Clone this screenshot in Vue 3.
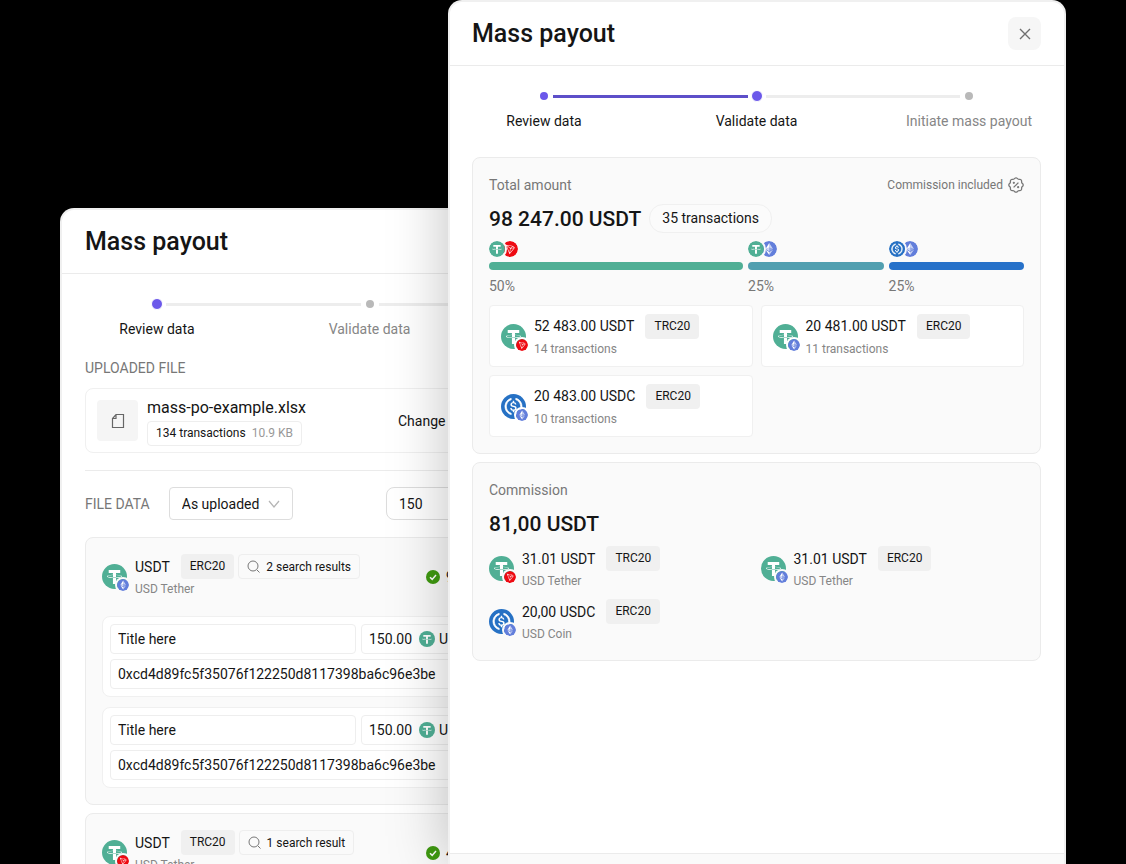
<script setup>
import { ref } from 'vue'

const steps = ['Review data', 'Validate data', 'Initiate mass payout']

const shares = [
  { coin: 'usdt', chain: 'trx', percent: 50, weight: 255, color: '#50af95' },
  { coin: 'usdt', chain: 'eth', percent: 25, weight: 136, color: '#519fb0' },
  { coin: 'usdc', chain: 'eth', percent: 25, weight: 136, color: '#2671c9' }
]
const shareColumns = shares.map((s) => `${s.weight}fr`).join(' ')

const totals = [
  { coin: 'usdt', chain: 'trx', amount: '52 483.00 USDT', network: 'TRC20', note: '14 transactions' },
  { coin: 'usdt', chain: 'eth', amount: '20 481.00 USDT', network: 'ERC20', note: '11 transactions' },
  { coin: 'usdc', chain: 'eth', amount: '20 483.00 USDC', network: 'ERC20', note: '10 transactions' }
]

const commissions = [
  { coin: 'usdt', chain: 'trx', amount: '31.01 USDT', network: 'TRC20', note: 'USD Tether' },
  { coin: 'usdt', chain: 'eth', amount: '31.01 USDT', network: 'ERC20', note: 'USD Tether' },
  { coin: 'usdc', chain: 'eth', amount: '20,00 USDC', network: 'ERC20', note: 'USD Coin' }
]

const address = '0xcd4d89fc5f35076f122250d8117398ba6c96e3be'
const groups = ref([
  {
    chain: 'eth', network: 'ERC20', found: '2 search results', valid: '9',
    rows: [
      { title: 'Title here', amount: '150.00', address },
      { title: 'Title here', amount: '150.00', address }
    ]
  },
  {
    chain: 'trx', network: 'TRC20', found: '1 search result', valid: '4',
    rows: [{ title: 'Title here', amount: '150.00', address }]
  }
])
const order = ref('As uploaded')
const limit = ref('150')
</script>

<template>
  <main class="stage">
    <svg class="sprite" aria-hidden="true">
      <symbol id="usdt" viewBox="0 0 32 32">
        <circle cx="16" cy="16" r="16" fill="#50af95" />
        <path fill="#fff" d="M17.922 17.383v-.002c-.11.008-.677.042-1.942.042-1.01 0-1.721-.03-1.971-.042v.003c-3.888-.171-6.79-.848-6.79-1.658 0-.809 2.902-1.486 6.79-1.66v2.644c.254.018.982.061 1.988.061 1.207 0 1.812-.05 1.925-.06v-2.643c3.88.173 6.775.85 6.775 1.658 0 .81-2.895 1.485-6.775 1.657m0-3.59v-2.366h5.414V7.819H8.595v3.608h5.414v2.365c-4.4.202-7.709 1.074-7.709 2.118 0 1.044 3.309 1.915 7.709 2.118v7.582h3.913v-7.584c4.393-.202 7.694-1.073 7.694-2.116 0-1.043-3.301-1.914-7.694-2.117" />
      </symbol>
      <symbol id="usdc" viewBox="0 0 32 32">
        <circle cx="16" cy="16" r="16" fill="#2671c4" />
        <path fill="#fff" d="M20.022 18.124c0-2.124-1.28-2.852-3.84-3.156-1.828-.243-2.193-.728-2.193-1.578 0-.85.61-1.396 1.828-1.396 1.097 0 1.707.364 2.011 1.275a.458.458 0 00.427.303h.975a.416.416 0 00.427-.425v-.06a3.04 3.04 0 00-2.743-2.489V9.142c0-.243-.183-.425-.487-.486h-.915c-.243 0-.426.182-.487.486v1.396c-1.829.242-2.986 1.456-2.986 2.974 0 2.002 1.218 2.791 3.778 3.095 1.707.303 2.255.668 2.255 1.639 0 .97-.853 1.638-2.011 1.638-1.585 0-2.133-.667-2.316-1.578-.06-.242-.244-.364-.427-.364h-1.036a.416.416 0 00-.426.425v.06c.243 1.518 1.219 2.61 3.23 2.914v1.457c0 .242.183.425.487.485h.915c.243 0 .426-.182.487-.485V21.34c1.829-.303 3.047-1.578 3.047-3.217z" />
        <path fill="#fff" stroke="#fff" stroke-width=".8" d="M12.892 24.497c-4.754-1.7-7.192-6.98-5.424-11.653.914-2.55 2.925-4.491 5.424-5.402.244-.121.365-.303.365-.607v-.85c0-.242-.121-.424-.365-.485-.061 0-.183 0-.244.06a10.895 10.895 0 00-7.13 13.717c1.096 3.4 3.717 6.01 7.13 7.102.244.121.488 0 .548-.243.061-.06.061-.122.061-.243v-.85c0-.182-.182-.424-.365-.546zm6.46-18.936c-.244-.122-.488 0-.548.242-.061.061-.061.122-.061.243v.85c0 .243.182.485.365.607 4.754 1.7 7.192 6.98 5.424 11.653-.914 2.55-2.925 4.491-5.424 5.402-.244.121-.365.303-.365.607v.85c0 .242.121.424.365.485.061 0 .183 0 .244-.06a10.895 10.895 0 007.13-13.717c-1.096-3.46-3.778-6.07-7.13-7.162z" />
      </symbol>
      <symbol id="eth" viewBox="0 0 32 32">
        <circle cx="16" cy="16" r="16" fill="#627edb" />
        <path fill="#fff" fill-opacity=".65" d="M16.5 4v8.870l7.497 3.350z" />
        <path fill="#fff" d="M16.500 4L9 16.220l7.500-3.350z" />
        <path fill="#fff" fill-opacity=".65" d="M16.500 21.968v6.027L24 17.616z" />
        <path fill="#fff" d="M16.500 27.995v-6.028L9 17.616z" />
        <path fill="#fff" fill-opacity=".3" d="M16.500 20.573l7.497-4.353-7.497-3.348z" />
        <path fill="#fff" fill-opacity=".7" d="M9 16.220l7.500 4.353v-7.701z" />
      </symbol>
      <symbol id="trx" viewBox="0 0 32 32">
        <circle cx="16" cy="16" r="16" fill="#ee0a12" />
        <path fill="#fff" d="M21.932 9.913L7.500 7.257l7.595 19.112 10.583-12.894-3.746-3.562zm-.232 1.170l2.208 2.099-6.038 1.093 3.830-3.192zm-5.142 2.973l-6.364-5.278 10.402 1.914-4.038 3.364zm-.453.934l-1.038 8.580L9.472 9.487l6.633 5.502zm.960.455l6.687-1.210-7.670 9.343.983-8.133z" />
      </symbol>
    </svg>

    <section class="panel back" aria-label="Review data">
      <header class="head"><h2>Mass payout</h2></header>
      <div class="body">
        <div class="track">
          <i class="dot now"></i><i class="line"></i><i class="dot"></i><i class="line"></i><i class="dot"></i>
        </div>
        <ol class="labels">
          <li v-for="(s, i) in steps" :key="s" :class="{ on: i < 1 }">{{ s }}</li>
        </ol>

        <h3 class="caption">UPLOADED FILE</h3>
        <div class="file">
          <span class="thumb">
            <svg width="14" height="16" viewBox="0 0 14 16" fill="none" stroke="#666" stroke-width="1.200">
              <path d="M5 1.500h7.500v13h-11V5.500zM5 1.500v4H1.500" />
            </svg>
          </span>
          <div class="fileinfo">
            <span class="filename">mass-po-example.xlsx</span>
            <span class="chip">134 transactions <span class="muted">10.9 KB</span></span>
          </div>
          <button type="button" class="change">Change file</button>
        </div>
        <hr />
        <div class="tools">
          <label for="order" class="caption">FILE DATA</label>
          <span class="picker">
            <select id="order" v-model="order"><option>As uploaded</option></select>
            <svg width="12" height="8" viewBox="0 0 12 8" fill="none" stroke="#b5b5b5" stroke-width="1.200"><path d="M1 1l5 6 5-6" /></svg>
          </span>
          <input v-model="limit" class="limit" aria-label="Row limit" />
        </div>

        <article v-for="g in groups" :key="g.network" class="card group">
          <div class="grouphead">
            <div class="asset">
              <span class="coin">
                <svg class="main"><use href="#usdt" /></svg>
                <svg class="sub"><use :href="'#' + g.chain" /></svg>
              </span>
              <div class="words">
                <div class="first">
                  <span class="name">USDT</span><span class="tag">{{ g.network }}</span>
                  <span class="chip found">
                    <svg width="13" height="13" viewBox="0 0 13 13" fill="none" stroke="#777"><circle cx="6" cy="6" r="5" /><path d="M10 10l2.500 2.500" /></svg>
                    {{ g.found }}
                  </span>
                </div>
                <span class="note">USD Tether</span>
              </div>
            </div>
            <span class="status">
              <svg width="14" height="14" viewBox="0 0 14 14"><circle cx="7" cy="7" r="7" fill="#3f9a10" /><path d="M4 7.200l2.200 2.200L10 5" fill="none" stroke="#fff" stroke-width="1.500" /></svg>
              {{ g.valid }}
            </span>
          </div>
          <div v-for="(r, i) in g.rows" :key="i" class="entry">
            <input v-model="r.title" class="field" aria-label="Title" />
            <div class="field money">
              <input v-model="r.amount" aria-label="Amount" />
              <svg width="16" height="16"><use href="#usdt" /></svg>
              <span>USDT</span>
            </div>
            <input v-model="r.address" class="field wide" aria-label="Address" />
          </div>
        </article>
      </div>
    </section>

    <section class="panel front" aria-label="Validate data">
      <header class="head">
        <h1>Mass payout</h1>
        <button type="button" class="close" aria-label="Close">
          <svg width="12" height="12" viewBox="0 0 12 12" fill="none" stroke="#707070" stroke-width="1.400"><path d="M1 1l10 10M11 1L1 11" /></svg>
        </button>
      </header>
      <div class="body">
        <div class="track">
          <i class="dot done"></i><i class="line full"></i><i class="dot now"></i><i class="line"></i><i class="dot"></i>
        </div>
        <ol class="labels">
          <li v-for="(s, i) in steps" :key="s" :class="{ on: i < 2 }">{{ s }}</li>
        </ol>

        <article class="card total">
          <div class="cardhead">
            <h3>Total amount</h3>
            <span class="included">
              Commission included
              <svg width="16" height="16" viewBox="2 2 20 20" fill="none" stroke="#777" stroke-width="1.600" stroke-linejoin="round">
                <path d="M5 7.200a2.200 2.200 0 0 1 2.200 -2.200h1a2.200 2.200 0 0 0 1.550 -.640l.7 -.7a2.200 2.200 0 0 1 3.120 0l.7 .7c.412 .410 .970 .640 1.550 .640h1a2.200 2.200 0 0 1 2.200 2.200v1c0 .580 .230 1.138 .640 1.550l.7 .7a2.200 2.200 0 0 1 0 3.120l-.7 .7a2.200 2.200 0 0 0 -.640 1.550v1a2.200 2.200 0 0 1 -2.200 2.200h-1a2.200 2.200 0 0 0 -1.550 .640l-.7 .7a2.200 2.200 0 0 1 -3.120 0l-.7 -.7a2.200 2.200 0 0 0 -1.550 -.640h-1a2.200 2.200 0 0 1 -2.200 -2.200v-1a2.200 2.200 0 0 0 -.640 -1.550l-.7 -.7a2.200 2.200 0 0 1 0 -3.120l.7 -.7a2.200 2.200 0 0 0 .640 -1.550v-1" />
                <path d="M9 15l6-6" /><circle cx="9.300" cy="9.300" r=".6" /><circle cx="14.700" cy="14.700" r=".6" />
              </svg>
            </span>
          </div>
          <div class="sum"><strong>98 247.00 USDT</strong><span class="pill">35 transactions</span></div>
          <div class="shares" :style="{ gridTemplateColumns: shareColumns }">
            <div v-for="(s, i) in shares" :key="i" class="share">
              <span class="pair">
                <svg><use :href="'#' + s.coin" /></svg>
                <svg><use :href="'#' + s.chain" /></svg>
              </span>
              <span class="bar" :style="{ background: s.color }"></span>
              <span class="percent">{{ s.percent }}%</span>
            </div>
          </div>
          <div class="tiles">
            <div v-for="t in totals" :key="t.amount" class="asset tile">
              <span class="coin">
                <svg class="main"><use :href="'#' + t.coin" /></svg>
                <svg class="sub"><use :href="'#' + t.chain" /></svg>
              </span>
              <div class="words">
                <div class="first"><span class="name">{{ t.amount }}</span><span class="tag">{{ t.network }}</span></div>
                <span class="note">{{ t.note }}</span>
              </div>
            </div>
          </div>
        </article>

        <article class="card">
          <div class="cardhead"><h3>Commission</h3></div>
          <div class="sum"><strong>81,00 USDT</strong></div>
          <div class="tiles plain">
            <div v-for="(t, i) in commissions" :key="i" class="asset">
              <span class="coin">
                <svg class="main"><use :href="'#' + t.coin" /></svg>
                <svg class="sub"><use :href="'#' + t.chain" /></svg>
              </span>
              <div class="words">
                <div class="first"><span class="name">{{ t.amount }}</span><span class="tag">{{ t.network }}</span></div>
                <span class="note">{{ t.note }}</span>
              </div>
            </div>
          </div>
        </article>
      </div>
      <footer class="foot"></footer>
    </section>
  </main>
</template>

<style>
body {
  background: #000;
}
</style>

<style scoped>
* {
  box-sizing: border-box;
}
.stage {
  display: grid;
  grid-template-columns: 388fr 230fr 388fr;
  grid-template-rows: minmax(0, 1fr);
  height: 100vh;
  padding: 0 60px;
  overflow: hidden;
  background: #000;
  color: #151515;
  font: 400 14px/20px Roboto, "Liberation Sans", sans-serif;
}
.sprite {
  position: absolute;
  width: 0;
  height: 0;
}
.panel {
  --surface: #fff;
  display: flex;
  flex-direction: column;
  grid-row: 1;
  min-width: 0;
  border: 2px solid #f0f0f0;
  border-bottom: 0;
  border-radius: 14px 14px 0 0;
  background: #fff;
}
.back {
  grid-column: 1 / 3;
  margin-top: 208px;
  overflow: hidden;
}
.front {
  grid-column: 2 / 4;
  z-index: 1;
  box-shadow: 0 0 60px rgba(0, 0, 0, 0.25);
}
.head {
  display: flex;
  flex: none;
  align-items: center;
  justify-content: space-between;
  height: 64px;
  padding: 0 23px 0 22px;
  border-bottom: 1px solid #ebebeb;
}
.back .head,
.back .body {
  padding-right: 22px;
  padding-left: 23px;
}
h1,
h2,
h3,
ol {
  margin: 0;
  padding: 0;
}
h1,
h2 {
  font-size: 25px;
  line-height: 32px;
  font-weight: 500;
}
.close {
  display: grid;
  place-items: center;
  width: 33px;
  height: 33px;
  padding: 0;
  border: 0;
  border-radius: 8px;
  background: #f6f6f6;
}
.body {
  flex: 1;
  min-height: 0;
  padding: 24px 23px 0 22px;
}
.track {
  display: flex;
  align-items: center;
  gap: 3px;
  height: 12px;
  margin: 0 66px;
}
.dot {
  flex: none;
  width: 12px;
  height: 12px;
  border: 2px solid #fff;
  border-radius: 50%;
  background: #b9b9b9;
}
.dot.done {
  background: #6b58ea;
}
.dot.now {
  border-width: 1px;
  background: #6b58ea;
}
.line {
  flex: 1;
  height: 3px;
  background: #ededed;
}
.line.full {
  background: #5d4fc9;
}
.labels {
  display: grid;
  grid-template-columns: 144px 1fr 144px;
  margin-top: 9px;
  list-style: none;
  text-align: center;
  color: #868686;
}
.labels .on {
  color: #151515;
}
h3,
.caption {
  font-size: 14px;
  line-height: 20px;
  font-weight: 400;
  color: #777;
}
h3.caption {
  margin-top: 19px;
}
.file {
  display: flex;
  align-items: center;
  gap: 9px;
  height: 65px;
  margin-top: 10px;
  padding: 0 11px;
  border: 1px solid #f0f0f0;
  border-radius: 8px;
}
.thumb {
  display: grid;
  place-items: center;
  width: 41px;
  height: 41px;
  border-radius: 4px;
  background: #f5f5f5;
}
.fileinfo {
  display: flex;
  flex: 1;
  flex-direction: column;
  align-items: flex-start;
  gap: 3px;
  padding-top: 2px;
}
.filename {
  font-size: 16px;
}
.chip {
  display: flex;
  align-items: center;
  gap: 6px;
  height: 25px;
  padding: 0 8px;
  border: 1px solid #eee;
  border-radius: 4px;
  font-size: 12px;
  white-space: nowrap;
}
.muted {
  color: #999;
}
.change {
  width: 244px;
  padding: 0;
  border: 0;
  background: none;
  color: inherit;
  font: inherit;
  text-align: left;
}
hr {
  height: 1px;
  margin: 17px 0 16px;
  border: 0;
  background: #ebebeb;
}
.tools {
  display: flex;
  align-items: center;
  margin-bottom: 17px;
}
.picker {
  position: relative;
  width: 124px;
  margin-left: 19px;
}
.picker svg {
  position: absolute;
  top: 13px;
  right: 13px;
  pointer-events: none;
}
select,
.limit {
  display: block;
  width: 100%;
  height: 33px;
  padding: 0 12px;
  border: 1px solid #ddd;
  border-radius: 4px;
  background: #fff;
  color: inherit;
  font: inherit;
  appearance: none;
}
.limit {
  width: 268px;
  margin-left: auto;
  border-radius: 8px;
}
.card {
  --surface: #fafafa;
  margin-bottom: 8px;
  padding: 16px;
  border: 1px solid #ebebeb;
  border-radius: 8px;
  background: #fafafa;
}
.labels + .card {
  margin-top: 26px;
}
.cardhead {
  display: flex;
  align-items: center;
  justify-content: space-between;
  height: 22px;
}
.included {
  display: flex;
  align-items: center;
  gap: 5px;
  font-size: 12px;
  color: #777;
}
.sum {
  display: flex;
  align-items: center;
  gap: 8px;
  height: 29px;
  margin-top: 8px;
}
.sum strong {
  font-size: 21px;
  font-weight: 500;
}
.pill {
  height: 29px;
  padding: 0 12px;
  border: 1px solid #f0f0f0;
  border-radius: 14px;
  background: #fbfbfb;
  line-height: 27px;
}
.shares {
  display: grid;
  gap: 5px;
  margin-top: 8px;
}
.share {
  display: flex;
  flex-direction: column;
}
.pair {
  display: flex;
  height: 16px;
}
.pair svg {
  width: 16px;
  height: 16px;
  border-radius: 50%;
}
.pair svg:first-child {
  z-index: 1;
  box-shadow: 0 0 0 2px var(--surface);
}
.pair svg:last-child {
  margin-left: -3px;
}
.bar {
  height: 8px;
  margin: 5px 0 6px;
  border-radius: 4px;
}
.percent {
  color: #777;
}
.tiles {
  display: grid;
  grid-template-columns: 1fr 1fr;
  gap: 8px;
  margin-top: 9px;
}
.tiles.plain {
  margin-top: 8px;
}
.asset {
  display: flex;
  align-items: center;
  gap: 8px;
}
.tile {
  --surface: #fff;
  height: 62px;
  padding: 0 11px;
  border: 1px solid #f0f0f0;
  border-radius: 4px;
  background: #fff;
}
.coin {
  position: relative;
  flex: none;
  width: 25px;
  height: 25px;
}
.main {
  display: block;
  width: 25px;
  height: 25px;
}
.sub {
  position: absolute;
  right: -2px;
  bottom: -2px;
  width: 12px;
  height: 12px;
  border-radius: 50%;
  box-shadow: 0 0 0 2px var(--surface);
}
.first {
  display: flex;
  align-items: center;
  height: 25px;
}
.name {
  margin-right: 11px;
  white-space: nowrap;
}
.tag {
  height: 25px;
  padding: 0 9px;
  border-radius: 4px;
  background: #f0f0f0;
  font-size: 12px;
  line-height: 25px;
}
.note {
  display: block;
  font-size: 12px;
  color: #868686;
}
.found {
  margin-left: 4px;
}
.grouphead {
  display: flex;
  align-items: center;
  justify-content: space-between;
  margin-bottom: 17px;
}
.status {
  display: flex;
  align-items: center;
  gap: 6px;
  width: 211px;
}
.entry {
  display: grid;
  grid-template-columns: 246fr 268fr;
  gap: 5px;
  padding: 7px;
  border: 1px solid #f0f0f0;
  border-radius: 8px;
  background: #fff;
}
.entry + .entry {
  margin-top: 10px;
}
.field {
  min-width: 0;
  height: 30px;
  padding: 0 7px;
  border: 1px solid #eee;
  border-radius: 4px;
  background: #fff;
  color: inherit;
  font: inherit;
}
.wide {
  grid-column: 1 / -1;
}
.money {
  display: flex;
  align-items: center;
  gap: 4px;
}
.money input {
  width: 46px;
  padding: 0;
  border: 0;
  color: inherit;
  font: inherit;
}
.foot {
  height: 11px;
  border-top: 1px solid #ebebeb;
  background: #fafafa;
}
</style>
